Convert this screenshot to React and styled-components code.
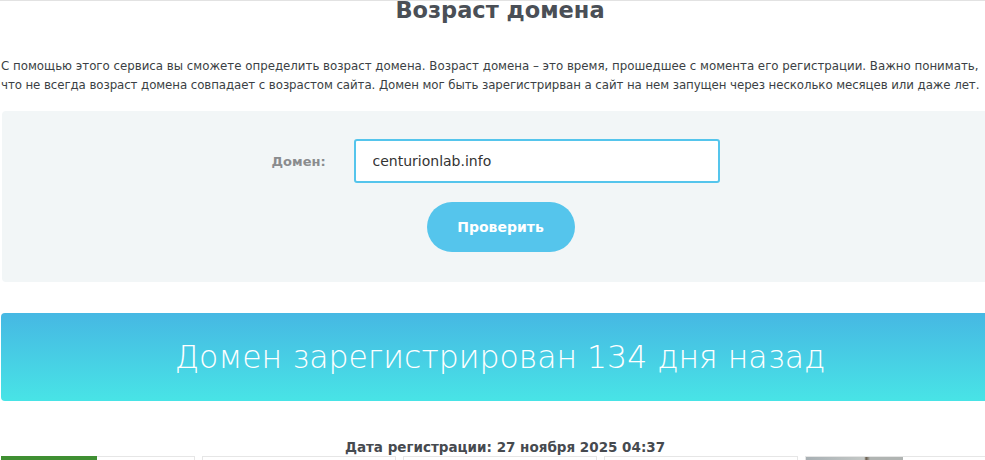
import React from 'react'
import styled, {createGlobalStyle} from 'styled-components'

const GlobalStyle = createGlobalStyle`
    html, body {
        margin: 0;
        padding: 0;
        background: #fff;
        overflow: hidden;
    }
    body {
        font-family: "DejaVu Sans", "Liberation Sans", sans-serif;
        color: #333;
    }
`

const colors = {
    blue: '#55c5ec',
    panel: '#f2f6f7',
    text: '#3b3f44',
}

const cards = [
    {accent: 'green'},
    {},
    {},
    {},
    {accent: 'photo'},
]

const App = () => {
    return (
        <Page>
            <GlobalStyle />
            <TopLine />
            <Container>
                <Title>Возраст домена</Title>
                <Intro>
                    <IntroLine>С помощью этого сервиса вы сможете определить возраст домена. Возраст домена – это время, прошедшее с момента его регистрации. Важно понимать,</IntroLine>
                    <IntroLine $tight>что не всегда возраст домена совпадает с возрастом сайта. Домен мог быть зарегистрирван а сайт на нем запущен через несколько месяцев или даже лет.</IntroLine>
                </Intro>
                <FormPanel>
                    <FieldRow>
                        <Label htmlFor="domain">Домен:</Label>
                        <Input id="domain" type="text" defaultValue="centurionlab.info" />
                    </FieldRow>
                    <Button type="button">Проверить</Button>
                </FormPanel>
                <Result>Домен зарегистрирован 134 дня назад</Result>
                <RegDate>Дата регистрации: 27 ноября 2025 04:37</RegDate>
                <Cards>
                    {cards.map((c, i) => (
                        <Card key={i}>
                            {c.accent === 'green' && <GreenBar />}
                            {c.accent === 'photo' && <Photo />}
                        </Card>
                    ))}
                </Cards>
            </Container>
        </Page>
    )
}

const Page = styled.div`
    width: 985px;
    height: 460px;
    overflow: hidden;
    position: relative;
`

const TopLine = styled.div`
    height: 1px;
    background: #e2e2e2;
    width: 100%;
`

const Container = styled.div`
    width: 998px;
    margin-left: 1px;
    display: flex;
    flex-direction: column;
`

const Title = styled.h1`
    margin: -6px 0 0;
    text-align: center;
    font-size: 22.5px;
    line-height: 30px;
    font-weight: 700;
    color: #4a4f56;
`

const Intro = styled.p`
    margin: 32px 0 0;
    font-size: 11.8px;
    line-height: 19px;
    color: ${colors.text};
`

const IntroLine = styled.span`
    display: block;
    white-space: nowrap;
    letter-spacing: ${p => (p.$tight ? '-0.08px' : '0')};
`

const FormPanel = styled.div`
    margin-top: 16px;
    margin-left: 1px;
    height: 171px;
    background: ${colors.panel};
    border-radius: 4px;
    display: flex;
    flex-direction: column;
    align-items: center;
    padding-top: 28px;
    box-sizing: border-box;
`

const FieldRow = styled.div`
    display: flex;
    align-items: center;
    margin-left: -10px;
`

const Label = styled.label`
    width: 82px;
    font-size: 13px;
    font-weight: 700;
    color: #8a8c8e;
`

const Input = styled.input`
    width: 366px;
    height: 44px;
    box-sizing: border-box;
    border: 2px solid ${colors.blue};
    border-radius: 3px;
    padding: 0 17px;
    font-family: "DejaVu Sans", sans-serif;
    font-size: 14px;
    color: #333;
    background: #fff;
    outline: none;
`

const Button = styled.button`
    margin-top: 19px;
    width: 148px;
    height: 50px;
    border: none;
    border-radius: 25px;
    background: ${colors.blue};
    color: #fff;
    font-family: "DejaVu Sans", sans-serif;
    font-size: 14px;
    font-weight: 700;
    cursor: pointer;
`

const Result = styled.div`
    margin-top: 31px;
    height: 88px;
    border-radius: 4px;
    background: linear-gradient(to bottom, #46b8e3, #48e4e6);
    color: #fff;
    display: flex;
    align-items: center;
    justify-content: center;
    font-size: 31.5px;
    font-weight: 300;
`

const RegDate = styled.div`
    margin-top: 38px;
    text-align: center;
    font-size: 13.5px;
    font-weight: 700;
    color: #464a4f;
    padding-left: 10px;
`

const Cards = styled.div`
    margin-top: 1px;
    display: flex;
    gap: 7px;
`

const Card = styled.div`
    position: relative;
    width: 194px;
    height: 160px;
    flex-shrink: 0;
    border: 1px solid #e6e6e6;
    box-sizing: border-box;
`

const GreenBar = styled.div`
    width: 96px;
    height: 4px;
    margin: -1px 0 0 -1px;
    background: #3f8f32;
`

const Photo = styled.div`
    width: 97px;
    height: 100%;
    background: linear-gradient(to right, #a8b0b4, #c4c8c6 60%, #6a5d4c 62%, #b0b4b2 66%);
`

export default App
